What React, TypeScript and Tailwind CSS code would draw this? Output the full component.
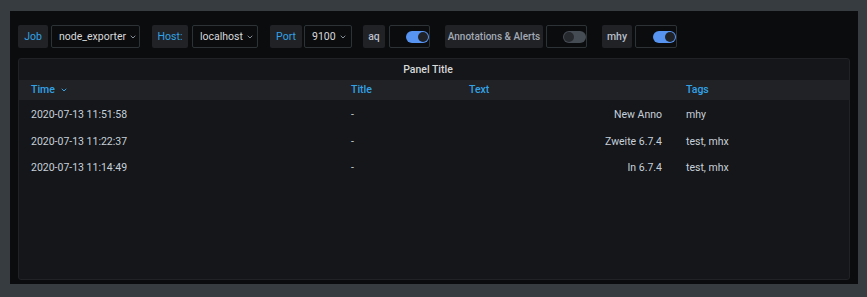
import { ChevronDown } from "lucide-react";

const rows = [
  { time: "2020-07-13 11:51:58", title: "-", text: "New Anno", tags: "mhy" },
  { time: "2020-07-13 11:22:37", title: "-", text: "Zweite 6.7.4", tags: "test, mhx" },
  { time: "2020-07-13 11:14:49", title: "-", text: "In 6.7.4", tags: "test, mhx" },
];

function Label({ children, w, blue = false }: { children: React.ReactNode; w: string; blue?: boolean }) {
  return (
    <div
      className={`h-[23px] flex items-center justify-center rounded-[2px] bg-[#202226] whitespace-nowrap ${w} ${
        blue ? "text-[#33a2e5]" : "text-[#b7bec8] font-medium"
      }`}
    >
      {children}
    </div>
  );
}

function Select({ value, w }: { value: string; w: string }) {
  return (
    <div className={`h-[23px] flex items-center gap-[3px] pl-[7px] rounded-[2px] border border-[#2c3235] bg-[#0b0c0e] text-[#d8d9da] ${w}`}>
      <span>{value}</span>
      <ChevronDown size={8} strokeWidth={2.5} className="text-[#9fa7b3] mt-[1px]" />
    </div>
  );
}

function Switch({ on, w }: { on: boolean; w: string }) {
  return (
    <div className={`h-[23px] flex items-center justify-end rounded-[2px] border border-[#2c3235] bg-[#0b0c0e] ${w}`}>
      <div
        className={`h-[12px] w-[23px] rounded-full flex items-center px-[1px] ${
          on ? "bg-[#5794f2] justify-end" : "bg-[#464c54] justify-start"
        }`}
      >
        <div className={`h-[10px] w-[10px] rounded-full ${on ? "bg-[#1f2227]" : "bg-[#26292e]"}`} />
      </div>
    </div>
  );
}

export default function App() {
  return (
    <div
      className="h-[297px] w-[867px] bg-[#373c40] pt-[11px] pl-[10px] text-[10.5px]"
      style={{ fontFamily: "Roboto, 'Liberation Sans', sans-serif" }}
    >
      <div className="w-[848px] h-[273px] bg-[#0b0c0e] px-[8px] pt-[14px] pb-[4px] flex flex-col">
        <div className="flex items-center h-[23px]">
          <div className="flex items-center gap-[3px]">
            <Label blue w="w-[30px]">Job</Label>
            <Select value="node_exporter" w="w-[89px]" />
          </div>
          <div className="flex items-center gap-[4px] ml-[12px]">
            <Label blue w="w-[36px]">Host:</Label>
            <Select value="localhost" w="w-[66px]" />
          </div>
          <div className="flex items-center gap-[2px] ml-[12px]">
            <Label blue w="w-[32px]">Port</Label>
            <Select value="9100" w="w-[48px]" />
          </div>
          <div className="flex items-center gap-[4px] ml-[11px]">
            <Label w="w-[22px]">aq</Label>
            <Switch on w="w-[41px]" />
          </div>
          <div className="flex items-center gap-[3px] ml-[15px]">
            <Label w="w-[98px]">
              <span className="text-[10px] text-[#a3aab5]">Annotations &amp; Alerts</span>
            </Label>
            <Switch on={false} w="w-[41px]" />
          </div>
          <div className="flex items-center gap-[3px] ml-[15px]">
            <Label w="w-[30px]">mhy</Label>
            <Switch on w="w-[42px]" />
          </div>
        </div>

        <div className="mt-[10px] flex-1 rounded-[3px] border border-[#202226] bg-[#141619] flex flex-col overflow-hidden">
          <div className="h-[21px] flex items-center justify-center pr-[12px] font-medium text-[#d8d9da]">
            Panel Title
          </div>
          <div className="h-[20px] grid grid-cols-[320px_118px_217px_1fr] items-center bg-[#202226] text-[#33a2e5] font-medium">
            <div className="pl-[12px] flex items-center gap-[5px]">
              Time
              <ChevronDown size={8} strokeWidth={3} />
            </div>
            <div className="pl-[12px]">Title</div>
            <div className="pl-[12px]">Text</div>
            <div className="pl-[12px]">Tags</div>
          </div>
          <div className="mt-[2px] flex flex-col text-[#c7d0d9]">
            {rows.map((r) => (
              <div key={r.time} className="h-[26.5px] grid grid-cols-[320px_118px_217px_1fr] items-center">
                <div className="pl-[12px]">{r.time}</div>
                <div className="pl-[12px]">{r.title}</div>
                <div className="pr-[12px] text-right">{r.text}</div>
                <div className="pl-[12px]">{r.tags}</div>
              </div>
            ))}
          </div>
        </div>
      </div>
    </div>
  );
}
